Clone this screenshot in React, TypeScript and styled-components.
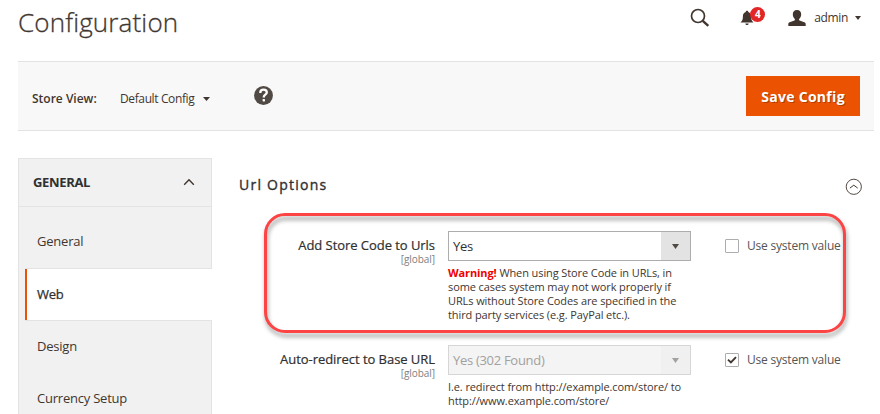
import React from "react";
import styled, { createGlobalStyle, css } from "styled-components";

const GlobalStyle = createGlobalStyle`
  * { box-sizing: border-box; }
  body { margin: 0; background: #fff; font-family: "Open Sans", "Noto Sans", sans-serif; color: #41362f; }
`;

const Page = styled.div`
  width: 880px;
  height: 414px;
  overflow: hidden;
  padding-left: 18px;
  background: #fff;
`;

const Header = styled.header`
  display: flex;
  justify-content: space-between;
  height: 61px;
  width: 856px;
`;

const Title = styled.h1`
  margin: 4px 0 0 0;
  font-size: 26px;
  font-weight: 300;
  line-height: 36px;
  letter-spacing: 0.15px;
  color: #41362f;
  -webkit-text-stroke: 0.3px #41362f;
`;

const HeaderTools = styled.div`
  display: flex;
  align-items: center;
  height: 36px;
  padding-right: 13px;
`;

const BellWrap = styled.div`
  position: relative;
  width: 26px;
  height: 20px;
  margin: 2px 22px 0 30px;
`;

const BellBadge = styled.span`
  position: absolute;
  left: 10px;
  top: -2px;
  width: 15px;
  height: 15px;
  border-radius: 50%;
  background: #e22626;
  color: #fff;
  font-size: 10px;
  font-weight: 700;
  line-height: 15px;
  text-align: center;
`;

const AdminName = styled.span`
  margin: 0 7px 0 8px;
  font-size: 12px;
  line-height: 18px;
  letter-spacing: -0.35px;
  color: #41362f;
`;

const Toolbar = styled.div`
  display: flex;
  align-items: center;
  width: 856px;
  height: 70px;
  padding: 0 14px;
  background: #f8f8f8;
  border: solid #e3e3e3;
  border-width: 1px 0;
`;

const StoreLabel = styled.span`
  width: 88px;
  margin-top: 5px;
  font-size: 12px;
  font-weight: 600;
  line-height: 18px;
`;

const StoreSwitch = styled.span`
  display: flex;
  align-items: center;
  gap: 9px;
  width: 134px;
  margin-top: 5px;
  font-size: 12px;
  line-height: 18px;
  letter-spacing: -0.38px;
`;

const SaveButton = styled.button`
  width: 114px;
  height: 40px;
  margin-left: auto;
  padding: 1px 0 0 0;
  border: 0;
  background: #eb5202;
  color: #fff;
  font-family: inherit;
  font-size: 14px;
  font-weight: 700;
  letter-spacing: 0.3px;
  text-shadow: 1px 1px 0 rgba(0, 0, 0, 0.25);
`;

const Body = styled.div`
  display: flex;
  padding-top: 27px;
`;

const Sidebar = styled.nav`
  width: 194px;
  height: 280px;
  background: #f1f1f1;
  border-left: 1px solid #e3e3e3;
  border-top: 1px solid #e3e3e3;
`;

const SidebarHeading = styled.div`
  display: flex;
  align-items: center;
  justify-content: space-between;
  height: 48px;
  padding: 0 16px 1px 14px;
  border-right: 1px solid #e3e3e3;
  border-bottom: 1px solid #e3e3e3;
  font-size: 13px;
  font-weight: 700;
  letter-spacing: -0.35px;
  color: #303030;
`;

const NavItem = styled.a<{ $active?: boolean; $first?: boolean }>`
  display: flex;
  align-items: center;
  height: ${(p) => (p.$first ? 61 : 52)}px;
  padding: ${(p) => (p.$first ? "6px 0 0 18px" : "0 0 2px 18px")};
  border-right: 1px solid #e3e3e3;
  background: #f1f1f1;
  font-size: 13px;
  line-height: 18px;
  letter-spacing: -0.22px;
  color: #41362f;
  ${(p) =>
    p.$active &&
    css`
      height: 53px;
      margin-left: 6px;
      padding-left: 12px;
      border: solid #e3e3e3;
      border-width: 1px 0;
      background: #fff;
      box-shadow: inset 2px 0 #eb5202;
      -webkit-text-stroke: 0.25px #303030;
      color: #303030;
    `}
`;

const Content = styled.main`
  width: 662px;
`;

const SectionHead = styled.div`
  display: flex;
  justify-content: space-between;
  height: 55px;
  padding: 14px 12px 0 27px;
`;

const SectionTitle = styled.h2`
  margin: 2px 0 0;
  font-size: 14px;
  font-weight: 400;
  line-height: 21px;
  letter-spacing: 1.25px;
  color: #303030;
  -webkit-text-stroke: 0.35px #303030;
`;

const FieldRow = styled.div`
  display: grid;
  grid-template-columns: 171px 243px 1fr;
  column-gap: 13px;
  position: relative;
  padding-left: 52px;
`;

const Highlighted = styled(FieldRow)`
  width: 582px;
  height: 120px;
  margin-left: 52px;
  padding: 18px 0 0 0;
  &::before {
    content: "";
    position: absolute;
    inset: 0;
    border: 3px solid #fd4444;
    border-radius: 21px;
    filter: drop-shadow(1px 4px 2px rgba(0, 0, 0, 0.38));
    pointer-events: none;
  }
`;

const PlainRow = styled(FieldRow)`
  margin-top: 12px;
`;

const FieldLabel = styled.div`
  display: flex;
  flex-direction: column;
  align-items: flex-end;
  padding-top: 5px;
  font-size: 13px;
  line-height: 18px;
  letter-spacing: -0.05px;
  color: #303030;
  white-space: nowrap;
`;

const LabelText = styled.span`
  -webkit-text-stroke: 0.2px #303030;
`;

const Scope = styled.span`
  font-size: 10px;
  line-height: 11px;
  color: #808080;
`;

const Select = styled.div<{ $disabled?: boolean }>`
  display: flex;
  justify-content: space-between;
  width: 243px;
  height: 30px;
  border: 1px solid ${(p) => (p.$disabled ? "#d6d6d6" : "#adadad")};
  background: ${(p) => (p.$disabled ? "#f4f4f4" : "#fff")};
  padding-left: 4px;
  font-size: 13px;
  line-height: 28px;
  letter-spacing: -0.3px;
  color: ${(p) => (p.$disabled ? "#a3a09e" : "#303030")};
`;

const SelectButton = styled.span<{ $disabled?: boolean }>`
  display: flex;
  align-items: center;
  justify-content: center;
  width: 29px;
  background: ${(p) => (p.$disabled ? "#f0f0f0" : "#e3e3e3")};
  color: ${(p) => (p.$disabled ? "#a3a09e" : "#514943")};
`;

const Note = styled.p`
  margin: 5px 0 0;
  font-size: 11px;
  line-height: 14px;
  letter-spacing: -0.1px;
  color: #41362f;
  white-space: nowrap;
`;

const Warning = styled.strong`
  font-weight: 700;
  color: #f00000;
`;

const Inherit = styled.label`
  display: flex;
  align-items: flex-start;
  gap: 8px;
  padding: 6px 0 0 21px;
  font-size: 12px;
  line-height: 18px;
  letter-spacing: -0.2px;
  color: #555;
  white-space: nowrap;
`;

const CheckBox = styled.span`
  display: flex;
  align-items: center;
  justify-content: center;
  width: 14px;
  height: 14px;
  margin-top: 2px;
  border: 1px solid #adadad;
  border-radius: 1px;
  background: #fff;
`;

const Caret = ({ w = 7, h = 4 }: { w?: number; h?: number }) => (
  <svg width={w} height={h} viewBox="0 0 8 4" preserveAspectRatio="none">
    <path d="M0 0h8L4 4z" fill="currentColor" />
  </svg>
);

const SelectCaret = () => <Caret w={7} h={5} />;

const SearchIcon = () => (
  <svg width="20" height="20" viewBox="0 0 20 20" fill="none" stroke="#41362f">
    <circle cx="8" cy="8" r="6.5" strokeWidth="1.7" />
    <path d="M12.8 12.8l5.5 5" strokeWidth="2.4" />
  </svg>
);

const BellIcon = () => (
  <svg width="14" height="18" viewBox="0 0 14 16" fill="#41362f">
    <path d="M7 .8c.8 0 1.2.5 1.3 1.1 2 .6 2.8 2.300 2.800 4.300 0 3.300.6 4.600 2.400 6.300H.5c1.800-1.700 2.400-3 2.400-6.300 0-2 .8-3.700 2.800-4.300C5.800 1.300 6.200.8 7 .8zM5.300 13.500h3.400c-.2 1-.8 1.500-1.700 1.500s-1.500-.5-1.700-1.500z" />
  </svg>
);

const UserIcon = () => (
  <svg width="18" height="16" viewBox="0 0 18 16" fill="#41362f">
    <path d="M9 0c2.700 0 4.200 1.800 4.200 4.300 0 1.900-.8 3.700-2 4.700-.3.600-.2 1.300.4 1.600l4.700 1.700c1 .4 1.400 1.100 1.400 2V16H.3v-1.700c0-.9.4-1.600 1.400-2l4.700-1.700c.6-.3.700-1 .4-1.600-1.200-1-2-2.800-2-4.700C4.800 1.800 6.300 0 9 0z" />
  </svg>
);

const HelpWrap = styled.span`
  display: flex;
  margin-top: -2px;
`;

const HelpIcon = () => (
  <svg width="19" height="19" viewBox="0 0 19 19">
    <circle cx="9.500" cy="9.500" r="9.400" fill="#514943" />
    <path d="M6.300 7V6.700c0-1.900 1.300-3 3.300-3s3.200 1 3.200 2.700c0 2.200-3 2.200-3 4.500v.5" fill="none" stroke="#fff" strokeWidth="2.300" />
    <rect x="8.600" y="13" width="2.400" height="2.400" rx=".6" fill="#fff" />
  </svg>
);

const ChevronUp = () => (
  <svg width="12" height="8" viewBox="0 0 12 8" fill="none" stroke="#41362f" strokeWidth="1.400">
    <path d="M1.200 6.700L6 1.700l4.800 5" />
  </svg>
);

const CollapseWrap = styled.span`
  display: flex;
  margin-top: 6px;
`;

const CollapseIcon = () => (
  <svg width="17" height="17" viewBox="0 0 17 17" fill="none" stroke="#41362f">
    <circle cx="8.800" cy="8.800" r="7.600" strokeWidth=".9" />
    <path d="M4.900 10.100l3.900-2.900 3.900 2.900" strokeWidth="1" />
  </svg>
);

const CheckMark = () => (
  <svg width="10" height="8" viewBox="0 0 10 8" fill="none" stroke="#41362f" strokeWidth="1.900">
    <path d="M1 3.600l2.900 2.800L9 1.200" />
  </svg>
);

const SystemValue = ({ checked }: { checked?: boolean }) => (
  <Inherit>
    <CheckBox>{checked && <CheckMark />}</CheckBox>
    Use system value
  </Inherit>
);

export default function App() {
  return (
    <Page>
      <GlobalStyle />
      <Header>
        <Title>Configuration</Title>
        <HeaderTools>
          <SearchIcon />
          <BellWrap>
            <BellIcon />
            <BellBadge>4</BellBadge>
          </BellWrap>
          <UserIcon />
          <AdminName>admin</AdminName>
          <Caret w={6} />
        </HeaderTools>
      </Header>
      <Toolbar>
        <StoreLabel>Store View:</StoreLabel>
        <StoreSwitch>
          Default Config <Caret />
        </StoreSwitch>
        <HelpWrap>
          <HelpIcon />
        </HelpWrap>
        <SaveButton>Save Config</SaveButton>
      </Toolbar>
      <Body>
        <Sidebar>
          <SidebarHeading>
            GENERAL <ChevronUp />
          </SidebarHeading>
          <NavItem $first>General</NavItem>
          <NavItem $active>Web</NavItem>
          <NavItem>Design</NavItem>
          <NavItem>Currency Setup</NavItem>
        </Sidebar>
        <Content>
          <SectionHead>
            <SectionTitle>Url Options</SectionTitle>
            <CollapseWrap>
              <CollapseIcon />
            </CollapseWrap>
          </SectionHead>
          <Highlighted>
            <FieldLabel>
              <LabelText>Add Store Code to Urls</LabelText>
              <Scope>[global]</Scope>
            </FieldLabel>
            <div>
              <Select>
                Yes
                <SelectButton>
                  <SelectCaret />
                </SelectButton>
              </Select>
              <Note>
                <Warning>Warning!</Warning> When using Store Code in URLs, in
                <br />
                some cases system may not work properly if
                <br />
                URLs without Store Codes are specified in the
                <br />
                third party services (e.g. PayPal etc.).
              </Note>
            </div>
            <SystemValue />
          </Highlighted>
          <PlainRow>
            <FieldLabel>
              <LabelText>Auto-redirect to Base URL</LabelText>
              <Scope>[global]</Scope>
            </FieldLabel>
            <div>
              <Select $disabled>
                Yes (302 Found)
                <SelectButton $disabled>
                  <SelectCaret />
                </SelectButton>
              </Select>
              <Note>
                I.e. redirect from http://example.com/store/ to
                <br />
                http://www.example.com/store/
              </Note>
            </div>
            <SystemValue checked />
          </PlainRow>
        </Content>
      </Body>
    </Page>
  );
}
